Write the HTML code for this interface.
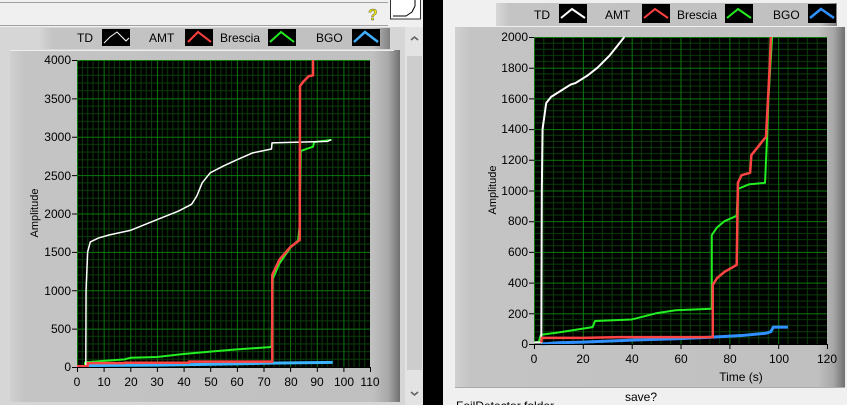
<!DOCTYPE html>
<html><head><meta charset="utf-8"><style>
body{margin:0;width:847px;height:405px;overflow:hidden;background:#f0f0f0;font-family:"Liberation Sans",sans-serif;font-size:12px;position:relative}
.a{position:absolute}
</style></head><body>
<svg class="a" style="left:0;top:0" width="847" height="405" xmlns="http://www.w3.org/2000/svg" font-family="Liberation Sans, sans-serif" font-size="12">
<defs>
<linearGradient id="fr" x1="0" x2="1"><stop offset="0" stop-color="#d0d0d0"/><stop offset="0.04" stop-color="#c4c4c4"/><stop offset="0.93" stop-color="#c0c0c0"/><stop offset="0.97" stop-color="#a8a8a8"/><stop offset="1" stop-color="#707070"/></linearGradient>
<linearGradient id="lg" x1="0" x2="1"><stop offset="0" stop-color="#d8d8d8"/><stop offset="0.04" stop-color="#c4c4c4"/><stop offset="0.95" stop-color="#c0c0c0"/><stop offset="1" stop-color="#808080"/></linearGradient>
<pattern id="gl" x="77" y="60" width="26.64" height="38.375" patternUnits="userSpaceOnUse">
<path d="M5.33 0V38.4M10.66 0V38.4M15.98 0V38.4M21.31 0V38.4M0 7.675H27M0 15.35H27M0 23.03H27M0 30.7H27" stroke="#0a3d0a" stroke-width="1"/>
<path d="M0.5 0V38.4M0 0.5H27" stroke="#0b7a0b" stroke-width="1"/></pattern>
<pattern id="gr" x="534" y="37" width="48.84" height="30.7" patternUnits="userSpaceOnUse">
<path d="M9.77 0V31M19.54 0V31M29.3 0V31M39.07 0V31M0 6.14H49M0 12.28H49M0 18.42H49M0 24.56H49" stroke="#0a3d0a" stroke-width="1"/>
<path d="M0.5 0V31M0 0.5H49" stroke="#0b7a0b" stroke-width="1"/></pattern>
</defs>
<!-- left top strip -->
<rect x="0" y="0" width="423" height="27" fill="#f0f0f0"/>
<line x1="0" y1="2.5" x2="388" y2="2.5" stroke="#a0a0a0"/>
<line x1="0" y1="25.5" x2="388" y2="25.5" stroke="#a0a0a0"/>
<text x="368" y="20" font-size="16" font-weight="bold" fill="#e8e000" stroke="#555" stroke-width="0.4">?</text>
<rect x="390.5" y="-1" width="30" height="20" fill="#fff" stroke="#333"/>
<path d="M393 16H406L412 12L415 6V0" fill="none" stroke="#000"/>
<rect x="0" y="27" width="405" height="378" fill="#d6d6d6"/>
<!-- legend left -->
<rect x="38" y="28" width="352" height="21" fill="url(#lg)"/>
<rect x="10" y="50" width="390" height="352" fill="url(#fr)"/>
<line x1="10" y1="50.5" x2="394" y2="50.5" stroke="#eee"/>
<!-- scrollbar -->
<rect x="405" y="27" width="18" height="378" fill="#e3e3e3"/>
<rect x="407" y="56" width="15" height="314" fill="#cdcdcd"/>
<path d="M411 40l3.5-3 3.5 3M411 392l3.5 3 3.5-3" fill="none" stroke="#606060" stroke-width="1.5"/>
<rect x="423" y="0" width="20" height="405" fill="#000"/>
<rect x="443" y="0" width="404" height="405" fill="#f0f0f0"/>
<!-- right legend/frame -->
<rect x="496" y="3" width="341" height="23" fill="url(#lg)"/>
<rect x="455" y="27" width="390" height="360" fill="url(#fr)"/>
<line x1="455" y1="387.5" x2="845" y2="387.5" stroke="#aaa"/>
<g fill="#000">
<text x="77" y="42">TD</text><text x="149" y="42">AMT</text><text x="220" y="42">Brescia</text><text x="316" y="42">BGO</text>
<text x="534" y="19">TD</text><text x="605" y="19">AMT</text><text x="677" y="19">Brescia</text><text x="773" y="19">BGO</text>
</g>
<g stroke-width="2" fill="none">
<rect x="102" y="29" width="28" height="17" fill="#000" stroke="none"/><path d="M104 43L110 37L117 32L126 41L129 38" stroke="#fff" stroke-width="1"/>
<rect x="185" y="29" width="28" height="17" fill="#000" stroke="none"/><path d="M188 42L198 32L211 42" stroke="#ff4040"/>
<rect x="268" y="29" width="28" height="17" fill="#000" stroke="none"/><path d="M270 42L281 32L294 42" stroke="#22ee22"/>
<rect x="352" y="29" width="28" height="17" fill="#000" stroke="none"/><path d="M354 42L365 32L378 42" stroke="#40b0ff" stroke-width="2.5"/>
<rect x="559" y="4" width="28" height="19" fill="#000" stroke="none"/><path d="M561 18L572 9L585 18" stroke="#fff"/>
<rect x="642" y="4" width="28" height="19" fill="#000" stroke="none"/><path d="M644 18L655 9L668 18" stroke="#ff4040"/>
<rect x="725" y="4" width="28" height="19" fill="#000" stroke="none"/><path d="M727 18L738 9L751 18" stroke="#22ee22"/>
<rect x="808" y="4" width="28" height="19" fill="#000" stroke="none"/><path d="M810 18L821 9L834 18" stroke="#3090ff" stroke-width="2.5"/>
</g>
<!-- left plot -->
<rect x="77" y="60" width="293" height="307" fill="#000"/>
<rect x="77" y="60" width="293" height="307" fill="url(#gl)"/>
<g transform="translate(77,367) scale(2.664,-0.07675)" fill="none" stroke-linejoin="round">
<polyline vector-effect="non-scaling-stroke" stroke="#3cb4ff" stroke-width="3" points="4,0 4,20 30,25 60,40 73,50 96,60"/>
<polyline vector-effect="non-scaling-stroke" stroke="#22ee22" stroke-width="2" points="3,20 3,60 10,80 18,100 20,120 30,130 40,170 50,200 60,230 73,260 73.5,1150 76,1350 80,1550 83,1650 83.6,1850 83.6,2000 84,2815 88.6,2870 89,2930 95.6,2960"/>
<polyline vector-effect="non-scaling-stroke" stroke="#fff" stroke-width="1.5" points="0,10 3.3,10 3.4,1000 4,1500 5,1630 8,1680 12,1720 20,1780 25,1850 30,1920 38,2030 43,2120 45,2230 47,2400 50,2530 55,2620 60,2700 66,2790 73,2840 73.2,2920 94,2940 95.3,2960"/>
<polyline vector-effect="non-scaling-stroke" stroke="#ff4444" stroke-width="2.5" points="0,10 4,10 4,50 18,50 18,55 42,55 42,70 73,70 73.3,70 73.3,1200 76,1400 80,1560 83.6,1655 83.7,3660 85,3720 87,3790 88.6,3800 88.6,4000"/>
</g>
<g font-size="12" text-anchor="end" fill="#000">
<text x="71" y="64">4000</text><text x="71" y="103">3500</text><text x="71" y="141">3000</text><text x="71" y="180">2500</text><text x="71" y="218">2000</text><text x="71" y="256">1500</text><text x="71" y="295">1000</text><text x="71" y="333">500</text><text x="71" y="371">0</text>
</g>
<path d="M72 60.5h5M72 98.9h5M72 137.3h5M72 175.6h5M72 214h5M72 252.4h5M72 290.8h5M72 329.1h5M72 367.5h5" stroke="#000"/>
<path d="M77 367.5H371M77.5 367v5M104.1 367v5M130.8 367v5M157.4 367v5M184.1 367v5M210.7 367v5M237.4 367v5M264 367v5M290.6 367v5M317.3 367v5M343.9 367v5M370.5 367v5" stroke="#000"/>
<g text-anchor="middle"><text x="77" y="386">0</text><text x="104" y="386">10</text><text x="131" y="386">20</text><text x="157" y="386">30</text><text x="184" y="386">40</text><text x="211" y="386">50</text><text x="237" y="386">60</text><text x="264" y="386">70</text><text x="291" y="386">80</text><text x="317" y="386">90</text><text x="344" y="386">100</text><text x="370" y="386">110</text></g>
<text transform="translate(38,213) rotate(-90)" text-anchor="middle" font-size="11">Amplitude</text>
<!-- right plot -->
<rect x="534" y="37" width="293" height="307" fill="#000"/>
<rect x="534" y="37" width="293" height="307" fill="url(#gr)"/>
<g transform="translate(534,344) scale(2.442,-0.1535)" fill="none" stroke-linejoin="round">
<polyline vector-effect="non-scaling-stroke" stroke="#3090ff" stroke-width="3" points="3,0 10,8 20,12 40,25 60,35 73,45 85,55 95,70 97,80 98,110 104,110"/>
<polyline vector-effect="non-scaling-stroke" stroke="#22ee22" stroke-width="2" points="0,10 2,15 2.8,60 10,75 20,100 24,110 25,150 40,160 50,200 58,220 72.8,230 72.8,710 75,760 78,800 83,835 83.5,1010 88,1040 94.6,1050 95.4,1330 96,1600 97.5,2000"/>
<polyline vector-effect="non-scaling-stroke" stroke="#fff" stroke-width="2" points="0,10 3,10 3.2,1000 3.5,1400 5,1570 7,1610 11,1650 15,1690 17,1700 22,1750 26,1800 31,1880 34,1940 37,2000"/>
<polyline vector-effect="non-scaling-stroke" stroke="#ff4444" stroke-width="2.5" points="3,10 3.2,40 10,40 20,40 35,45 73.2,45 73.2,385 75,430 78,470 83,515 83.5,1050 85,1100 88.5,1115 89,1230 92.5,1300 95,1350 95.5,1500 96.5,1800 97,2000"/>
</g>
<g text-anchor="end"><text x="528" y="41">2000</text><text x="528" y="72">1800</text><text x="528" y="103">1600</text><text x="528" y="133">1400</text><text x="528" y="164">1200</text><text x="528" y="195">1000</text><text x="528" y="225">800</text><text x="528" y="256">600</text><text x="528" y="287">400</text><text x="528" y="318">200</text><text x="528" y="348">0</text></g>
<path d="M529 37.5h5M529 68.2h5M529 98.9h5M529 129.6h5M529 160.3h5M529 191h5M529 221.7h5M529 252.4h5M529 283.1h5M529 313.8h5M529 344.5h5" stroke="#000"/>
<path d="M534 344.5H828M534.5 344v5M583.3 344v5M632.2 344v5M681 344v5M729.9 344v5M778.7 344v5M827.5 344v5" stroke="#000"/>
<g text-anchor="middle"><text x="534" y="363">0</text><text x="583" y="363">20</text><text x="632" y="363">40</text><text x="681" y="363">60</text><text x="730" y="363">80</text><text x="779" y="363">100</text><text x="827" y="363">120</text></g>
<text x="741" y="381" text-anchor="middle">Time (s)</text>
<text transform="translate(496,190) rotate(-90)" text-anchor="middle" font-size="11">Amplitude</text>
<text x="625" y="401">save?</text>
<text x="456" y="410">FoilDetector folder</text>
</svg>
</body></html>
